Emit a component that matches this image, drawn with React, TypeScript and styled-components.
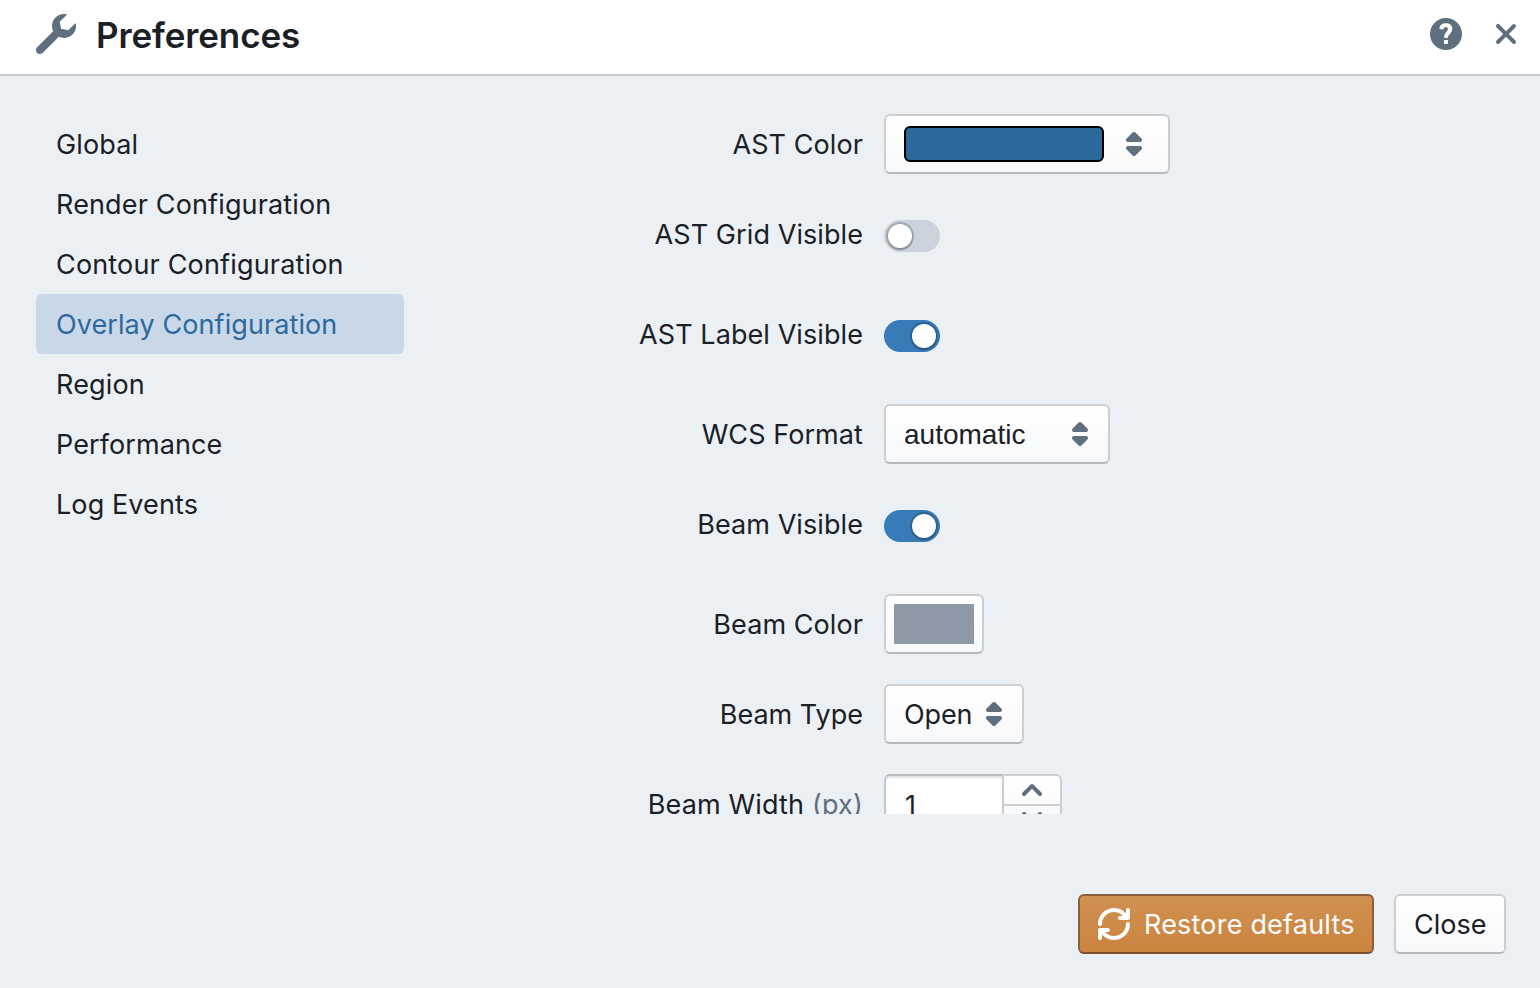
import React, { useState } from "react";
import styled, { createGlobalStyle } from "styled-components";

const GlobalStyle = createGlobalStyle`
  *, *::before, *::after { box-sizing: border-box; }
  body {
    margin: 0;
    background: #ebf0f4;
    color: #1b2026;
    font-family: Inter, "Liberation Sans", sans-serif;
    font-size: 27px;
    line-height: 36px;
  }
  button, input { font: inherit; color: inherit; margin: 0; }
`;

const Dialog = styled.div`
  display: flex;
  flex-direction: column;
  height: 988px;
  overflow: hidden;
`;

const Header = styled.header`
  display: flex;
  align-items: center;
  flex: none;
  height: 76px;
  padding: 0 14px 6px 36px;
  background: #fff;
  border-bottom: 2px solid #c9ccd0;
  color: #5f6f7e;
`;

const Title = styled.h4`
  flex: 1;
  margin: 1px 0 0 20px;
  font-size: 35px;
  line-height: 42px;
  font-weight: 600;
  letter-spacing: -0.12px;
  color: #1b2026;
`;

const HeaderButton = styled.button`
  display: flex;
  padding: 0;
  margin-left: 24px;
  border: 0;
  background: none;
  color: #5f6f7e;
`;

const Body = styled.main`
  display: flex;
  flex: none;
  height: 738px;
  padding: 38px 36px 0;
`;

const Sidebar = styled.nav`
  display: flex;
  flex-direction: column;
  flex: none;
  width: 368px;
`;

const Tab = styled.button<{ $active: boolean; $spacing: number }>`
  height: 60px;
  flex: none;
  padding: 2px 20px 0;
  border: 0;
  border-radius: 6px;
  text-align: left;
  white-space: nowrap;
  letter-spacing: ${(p) => p.$spacing}px;
  color: ${(p) => (p.$active ? "#2d699e" : "inherit")};
  background: ${(p) => (p.$active ? "#c8d8e8" : "transparent")};
`;

const Panel = styled.section`
  flex: 1;
  height: 700px;
  overflow: hidden;
`;

const Row = styled.div<{ $gap: number }>`
  display: flex;
  align-items: flex-start;
  height: 60px;
  margin-bottom: ${(p) => p.$gap}px;
`;

const Label = styled.label<{ $spacing: number }>`
  width: 459px;
  margin-right: 21px;
  line-height: 62px;
  text-align: right;
  white-space: nowrap;
  letter-spacing: ${(p) => p.$spacing}px;
`;

const Unit = styled.span`
  color: #5f6f7e;
`;

const Button = styled.button<{ $width: number; $primary?: boolean; $pad?: string }>`
  display: flex;
  align-items: center;
  width: ${(p) => p.$width}px;
  height: 60px;
  padding: ${(p) => p.$pad ?? "0 18px"};
  border: 2px solid;
  border-color: ${(p) => (p.$primary ? "#89603a #89603a #765030" : "#ccced0 #ccced0 #b5b8bc")};
  border-radius: 6px;
  color: ${(p) => (p.$primary ? "#fff" : "#1b2026")};
  background: ${(p) => (p.$primary ? "linear-gradient(#d09152, #cb833e)" : "linear-gradient(#fff, #f7f8fa)")};
  white-space: nowrap;
`;

const Caption = styled.span<{ $spacing?: number; $grow?: boolean }>`
  flex: ${(p) => (p.$grow ? 1 : "none")};
  padding-top: 2px;
  text-align: left;
  letter-spacing: ${(p) => p.$spacing ?? 0}px;
`;

const ActionCaption = styled(Caption)`
  margin-left: 14px;
`;

const NativeCaption = styled(Caption)`
  font-family: "Liberation Sans", Arial, sans-serif;
  font-size: 28px;
`;

const ColorBar = styled.span`
  flex: none;
  width: 200px;
  height: 36px;
  margin-right: 14px;
  border: 2px solid #000;
  border-radius: 6px;
  background: #2d699d;
`;

const Swatch = styled.span`
  width: 80px;
  height: 40px;
  background: #8d99a6;
`;

const Switch = styled.button<{ $on: boolean }>`
  display: flex;
  justify-content: ${(p) => (p.$on ? "flex-end" : "flex-start")};
  width: 56px;
  height: 32px;
  margin-top: 16px;
  padding: 4px;
  border: 0;
  border-radius: 16px;
  background: ${(p) => (p.$on ? "#387bb9" : "#cad2dc")};
`;

const Knob = styled.span`
  width: 24px;
  height: 24px;
  border-radius: 50%;
  background: #fff;
  box-shadow: 0 0 0 2px rgba(16, 22, 26, 0.22), 0 2px 2px rgba(16, 22, 26, 0.22);
`;

const NumberInput = styled.input`
  width: 118px;
  height: 60px;
  padding: 2px 18px 0 19px;
  border: 2px solid #c4c8cb;
  border-right: 0;
  border-top-color: #b8bcc0;
  border-radius: 6px 0 0 6px;
  background: #fff;
  box-shadow: inset 0 2px 2px rgba(16, 22, 26, 0.12);
  outline: 0;
`;

const Stepper = styled.div`
  display: flex;
  flex-direction: column;
  width: 60px;
  height: 60px;
  border: 2px solid #ccced0;
  border-radius: 0 6px 6px 0;
  background: linear-gradient(#fff, #f6f7f9);
`;

const Step = styled.button`
  display: flex;
  justify-content: center;
  height: 28px;
  padding: 0;
  border: 0;
  background: none;
  & + & { height: 30px; border-top: 2px solid #ccced0; }
  svg { margin-top: -2px; }
  & + & svg { margin-top: -4px; }
`;

const Footer = styled.footer`
  display: flex;
  justify-content: flex-end;
  gap: 20px;
  padding: 80px 34px 0 0;
`;

const Svg = styled.svg`
  display: block;
  flex: none;
  fill: currentColor;
`;

const SelectIcon = styled(Svg)`
  color: #5f6f7e;
`;

const icons = {
  wrench:
    "M19.8 4.44L16.13 8.1l-3.55-.71-.71-3.53L15.54.21c-2.01-.53-4.23-.03-5.8 1.53-1.86 1.85-2.23 4.6-1.14 6.83L.59 16.59C.22 16.95 0 17.45 0 18a2 2 0 002 2c.55 0 1.05-.22 1.41-.59l8.03-8.04c2.23 1.05 4.97.67 6.82-1.16 1.57-1.56 2.07-3.77 1.54-5.77z",
  help:
    "M8 0C3.58 0 0 3.58 0 8s3.58 8 8 8 8-3.58 8-8-3.58-8-8-8zM9 13H7v-2h2v2zm1.93-6.52c-.14.32-.35.64-.62.97L9.25 8.83c-.12.15-.24.29-.28.42-.04.13-.09.3-.09.52V10H7.12V8.88s.05-.51.21-.71L8.4 6.73c.22-.26.35-.49.44-.68.09-.2.12-.39.12-.57 0-.3-.1-.55-.28-.75-.18-.19-.44-.28-.76-.28-.33 0-.59.1-.78.29-.19.19-.33.46-.4.81-.03.11-.1.15-.2.14l-1.7-.25c-.12-.01-.16-.08-.14-.19.12-.82.46-1.47 1.03-1.94.57-.48 1.32-.72 2.25-.72.47 0 .9.07 1.29.22s.72.34 1 .59c.28.25.49.55.65.89.15.35.22.72.22 1.12s-.07.75-.21 1.08z",
  cross:
    "M11.41 10l3.29-3.29c.19-.18.3-.43.3-.71a1.003 1.003 0 00-1.71-.71L10 8.59l-3.29-3.3a1.003 1.003 0 00-1.42 1.42L8.59 10 5.3 13.29c-.19.18-.3.43-.3.71a1.003 1.003 0 001.71.71l3.29-3.3 3.29 3.29c.18.19.43.3.71.3a1.003 1.003 0 00.71-1.71L11.41 10z",
  caret:
    "M5 7h6a1.003 1.003 0 00.71-1.71l-3-3C8.53 2.11 8.28 2 8 2s-.53.11-.71.29l-3 3A1.003 1.003 0 005 7zm6 2H5a1.003 1.003 0 00-.71 1.71l3 3c.18.18.43.29.71.29s.53-.11.71-.29l3-3A1.003 1.003 0 0011 9z",
  up:
    "M12.71 9.29l-4-4C8.53 5.11 8.28 5 8 5s-.53.11-.71.29l-4 4a1.003 1.003 0 001.42 1.42L8 7.41l3.29 3.29c.18.19.43.3.71.3a1.003 1.003 0 00.71-1.71z",
  down:
    "M12 5c-.28 0-.53.11-.71.29L8 8.59l-3.29-3.3a1.003 1.003 0 00-1.42 1.42l4 4c.18.18.43.29.71.29s.53-.11.71-.29l4-4A1.003 1.003 0 0012 5z",
  refresh:
    "M14.99 6.99c-.55 0-1 .45-1 1 0 3.31-2.69 6-6 6-1.77 0-3.36-.78-4.46-2h1.46c.55 0 1-.45 1-1s-.45-1-1-1h-4c-.55 0-1 .45-1 1v4c0 .55.45 1 1 1s1-.45 1-1v-1.74a7.95 7.95 0 006 2.74c4.42 0 8-3.58 8-8 0-.55-.45-1-1-1zm0-7c-.55 0-1 .45-1 1v1.74a7.95 7.95 0 00-6-2.74c-4.42 0-8 3.58-8 8 0 .55.45 1 1 1s1-.45 1-1c0-3.31 2.69-6 6-6 1.77 0 3.36.78 4.46 2h-1.46c-.55 0-1 .45-1 1s.45 1 1 1h4c.55 0 1-.45 1-1v-4c0-.56-.45-1-1-1z",
};

function Icon({ name, grid = 16 }: { name: keyof typeof icons; grid?: number }) {
  const Base = name === "caret" || name === "up" || name === "down" ? SelectIcon : Svg;
  return (
    <Base width={grid * 2} height={grid * 2} viewBox={`0 0 ${grid} ${grid}`} aria-hidden>
      <path fillRule="evenodd" d={icons[name]} />
    </Base>
  );
}

const tabs: [string, number][] = [
  ["Global", 0.15],
  ["Render Configuration", 0.15],
  ["Contour Configuration", 0.17],
  ["Overlay Configuration", 0.09],
  ["Region", 0.15],
  ["Performance", 0.1],
  ["Log Events", 0.1],
];

function Field(props: { label: string; spacing?: number; unit?: string; gap?: number; children: React.ReactNode }) {
  return (
    <Row $gap={props.gap ?? 30}>
      <Label $spacing={props.spacing ?? 0.08}>
        {props.label}
        {props.unit && <Unit> {props.unit}</Unit>}
      </Label>
      {props.children}
    </Row>
  );
}

function Toggle({ initial }: { initial: boolean }) {
  const [on, setOn] = useState(initial);
  return (
    <Switch type="button" role="switch" aria-checked={on} $on={on} onClick={() => setOn(!on)}>
      <Knob />
    </Switch>
  );
}

export default function App() {
  const [active, setActive] = useState("Overlay Configuration");
  return (
    <Dialog>
      <GlobalStyle />
      <Header>
        <Icon name="wrench" grid={20} />
        <Title>Preferences</Title>
        <HeaderButton aria-label="Help"><Icon name="help" /></HeaderButton>
        <HeaderButton aria-label="Close"><Icon name="cross" grid={20} /></HeaderButton>
      </Header>
      <Body>
        <Sidebar>
          {tabs.map(([name, spacing]) => (
            <Tab key={name} $active={name === active} $spacing={spacing} onClick={() => setActive(name)}>
              {name}
            </Tab>
          ))}
        </Sidebar>
        <Panel>
          <Field label="AST Color">
            <Button $width={286}>
              <ColorBar />
              <Icon name="caret" />
            </Button>
          </Field>
          <Field label="AST Grid Visible" gap={40}><Toggle initial={false} /></Field>
          <Field label="AST Label Visible" gap={40}><Toggle initial /></Field>
          <Field label="WCS Format">
            <Button $width={226} $pad="0 12px 0 18px">
              <NativeCaption $grow>automatic</NativeCaption>
              <Icon name="caret" />
            </Button>
          </Field>
          <Field label="Beam Visible" gap={40}><Toggle initial /></Field>
          <Field label="Beam Color">
            <Button $width={100} $pad="0 8px"><Swatch /></Button>
          </Field>
          <Field label="Beam Type" spacing={0}>
            <Button $width={140} $pad="0 12px 0 18px">
              <Caption $grow $spacing={-0.1}>Open</Caption>
              <Icon name="caret" />
            </Button>
          </Field>
          <Field label="Beam Width" unit="(px)" spacing={0.16}>
            <NumberInput defaultValue="1" />
            <Stepper>
              <Step aria-label="Increase"><Icon name="up" /></Step>
              <Step aria-label="Decrease"><Icon name="down" /></Step>
            </Stepper>
          </Field>
        </Panel>
      </Body>
      <Footer>
        <Button $width={296} $primary>
          <Icon name="refresh" />
          <ActionCaption $spacing={0.2}>Restore defaults</ActionCaption>
        </Button>
        <Button $width={112}>
          <Caption>Close</Caption>
        </Button>
      </Footer>
    </Dialog>
  );
}
